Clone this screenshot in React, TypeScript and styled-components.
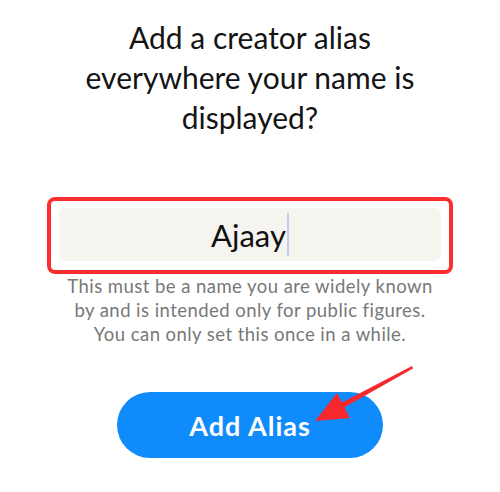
import React from 'react';
import styled, { createGlobalStyle } from 'styled-components';

const GlobalStyle = createGlobalStyle`
  html, body {
    margin: 0;
    padding: 0;
    background: #ffffff;
  }
  body {
    font-family: Lato, 'Noto Sans', sans-serif;
  }
`;

const Page = styled.div`
  position: relative;
  width: 500px;
  height: 492px;
  display: flex;
  flex-direction: column;
  align-items: center;
  overflow: hidden;
`;

const Title = styled.h1`
  margin: 17px 0 0;
  font-size: 30px;
  font-weight: 400;
  line-height: 40px;
  text-align: center;
  color: #141414;
`;

const Highlight = styled.div`
  box-sizing: border-box;
  margin-top: 60px;
  width: 406px;
  height: 77px;
  padding: 7px 8px;
  border: 4.5px solid #fc2d31;
  border-radius: 8px;
`;

const Field = styled.div`
  height: 53px;
  border-radius: 7px;
  background: #f5f4ee;
  display: flex;
  align-items: center;
  justify-content: center;
  font-size: 31px;
  color: #111111;
`;

const Caret = styled.span`
  display: inline-block;
  width: 2px;
  height: 43px;
  margin-left: 1px;
  background: #c6cdf2;
`;

const Helper = styled.p`
  margin: 0;
  font-size: 18.5px;
  letter-spacing: 0.45px;
  line-height: 24px;
  text-align: center;
  color: #787878;
`;

const Button = styled.button`
  margin-top: 46px;
  width: 266px;
  height: 66px;
  border: none;
  border-radius: 33px;
  background: #0f8bfc;
  color: #ffffff;
  font-family: inherit;
  font-size: 27px;
  font-weight: 700;
  letter-spacing: 1px;
  cursor: pointer;
`;

const Arrow = styled.svg`
  position: absolute;
  left: 0;
  top: 0;
  pointer-events: none;
`;

export default function App() {
  return (
    <Page>
      <GlobalStyle />
      <Title>
        Add a creator alias
        <br />
        everywhere your name is
        <br />
        displayed?
      </Title>
      <Highlight>
        <Field>
          Ajaay
          <Caret />
        </Field>
      </Highlight>
      <Helper>
        This must be a name you are widely known
        <br />
        by and is intended only for public figures.
        <br />
        You can only set this once in a while.
      </Helper>
      <Button>Add Alias</Button>
      <Arrow width="500" height="492" viewBox="0 0 500 492">
        <polygon points="412,366 413,368.5 344,407.5 341,403" fill="#f5282d" />
        <polygon points="315,421 337,393 343.5,405.5 350,418" fill="#f5282d" />
      </Arrow>
    </Page>
  );
}
